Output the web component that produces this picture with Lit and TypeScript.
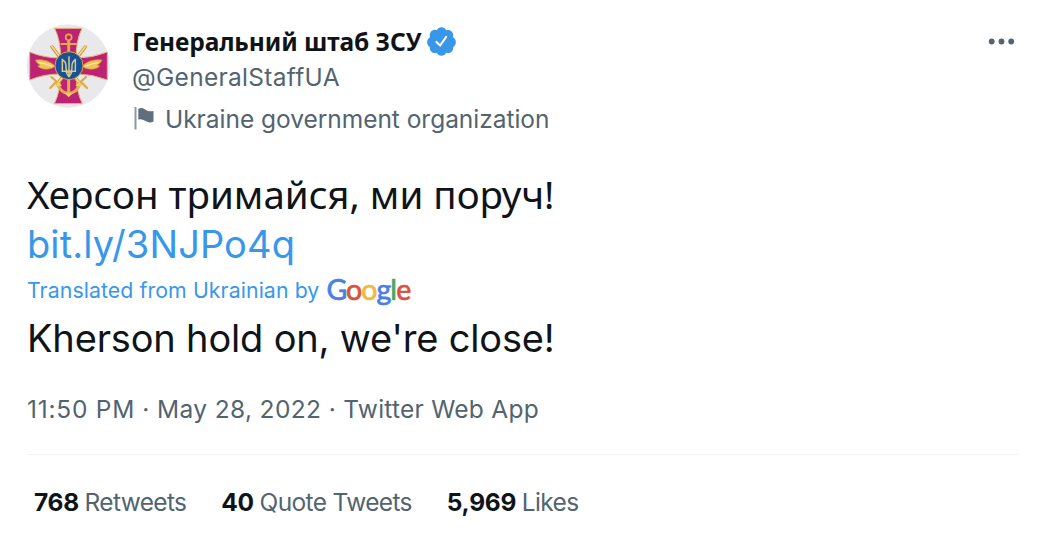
import { LitElement, html, css, svg } from 'lit';
import { customElement } from 'lit/decorators.js';

@customElement('staff-emblem')
class StaffEmblem extends LitElement {
    static styles = css`
        :host {
            display: block;
            width: 84px;
            height: 84px;
        }

        svg {
            display: block;
        }
    `;

    render() {
        const half = svg`
            <g stroke-linecap="round" fill="none">
                <path d="M196 92L112 204" stroke="#c99236" stroke-width="10" />
                <path d="M197 90L112 204" stroke="#f7d98a" stroke-width="5" />
                <path d="M94 183L121 207" stroke="#dba541" stroke-width="6" />
                <path d="M108 198L91 216" stroke="#e0aa45" stroke-width="7" />
            </g>
            <path
                d="M46 132C66 129 90 134 106 151C89 164 64 162 53 150L60 147C54 145 49 139 46 132Z"
                fill="#f0c35c"
                stroke="#c58c2e"
                stroke-width="2"
            />
            <path d="M58 140Q78 143 97 151" fill="none" stroke="#fff0b8" stroke-width="3" />
        `;
        return html`
            <svg width="84" height="84" viewBox="18 24 252 252">
                <circle cx="145" cy="150" r="125" fill="#e9e9eb" />
                <path
                    d="M104 37H186Q168 74 168 126Q218 126 262 108V192Q218 174 168 174Q168 224 187 263H103Q122 224 122 174Q72 174 29 192V108Q72 126 122 126Q122 74 104 37Z"
                    fill="#bd2275"
                    stroke="#e5b777"
                    stroke-width="3"
                />
                <g>${half}</g>
                <g transform="matrix(-1 0 0 1 292 0)">${half}</g>
                <g fill="none" stroke="#e3ae49">
                    <circle cx="146" cy="64" r="9" stroke-width="5" />
                    <path d="M146 75V108" stroke-width="9" />
                    <path d="M124 84H168" stroke-width="6" stroke-linecap="round" />
                    <path d="M146 192V228" stroke-width="9" />
                    <path d="M113 205Q122 231 146 232Q170 231 179 205" stroke-width="9" />
                </g>
                <path d="M106 212L113 196L126 210ZM186 212L179 196L166 210ZM134 232L146 244L158 232Z" fill="#f1cb74" />
                <circle cx="147" cy="149" r="42" fill="#165294" stroke="#d8a548" stroke-width="3" />
                <path
                    d="M147 121V178M127 128V166H166V128M127 131Q139 138 138 152Q137 166 147 170Q157 166 156 152Q155 138 166 131M138 166Q140 174 147 182Q154 174 156 166"
                    fill="none"
                    stroke="#dcc78c"
                    stroke-width="4.5"
                />
            </svg>
        `;
    }
}

@customElement('app-root')
class AppRoot extends LitElement {
    static styles = css`
        :host {
            display: block;
            box-sizing: border-box;
            height: 544px;
            padding: 24px 25px 0 26px;
            background: #fff;
            color: #0f1419;
            font-family: Inter, 'Noto Sans', sans-serif;
            font-size: 24.5px;
            white-space: nowrap;
        }

        svg {
            display: block;
            flex: none;
        }

        header {
            display: flex;
            align-items: flex-start;
            height: 119px;
        }

        .who {
            flex: 1;
            margin-left: 22px;
            color: #536471;
        }

        .name {
            display: flex;
            align-items: center;
            gap: 6px;
            height: 35px;
            color: #0f1419;
            font-family: 'Noto Sans', sans-serif;
            font-weight: 700;
            letter-spacing: -0.08px;
        }

        .handle {
            line-height: 37px;
            letter-spacing: 0.3px;
        }

        .label {
            display: flex;
            align-items: center;
            gap: 10px;
            line-height: 46px;
            letter-spacing: -0.03px;
        }

        .label svg {
            margin: -3px 0 0 2px;
        }

        .more {
            margin: 13px 2px 0 0;
        }

        .text,
        a,
        .translated,
        .translation,
        .meta {
            padding-left: 1px;
        }

        .text {
            margin-top: 27px;
            font-family: 'Noto Sans', sans-serif;
            font-size: 38.5px;
            line-height: 49px;
        }

        a {
            display: block;
            color: #3997e9;
            font-size: 38px;
            line-height: 50px;
            letter-spacing: 0.1px;
            text-decoration: none;
        }

        .translated {
            display: flex;
            align-items: center;
            gap: 7px;
            height: 41px;
            margin-bottom: 2px;
            color: #3997e9;
            font-size: 21.3px;
            letter-spacing: 0.08px;
        }

        .google {
            font-family: Lato, sans-serif;
            font-size: 28.5px;
            line-height: 41px;
            letter-spacing: -0.95px;
        }

        .google span {
            -webkit-text-stroke: 0.7px currentColor;
        }

        .blue {
            color: #4a7fe5;
        }

        .red {
            color: #da5140;
        }

        .yellow {
            color: #f0b93a;
        }

        .green {
            color: #4fa463;
        }

        .translation {
            font-size: 38px;
            line-height: 52px;
            letter-spacing: -0.17px;
        }

        .meta {
            margin-top: 31px;
            line-height: 28px;
            letter-spacing: 0.37px;
        }

        .time {
            letter-spacing: 0.75px;
        }

        .source {
            letter-spacing: 0.25px;
        }

        .meta,
        .stats {
            color: #536471;
        }

        .stats {
            display: flex;
            gap: 35px;
            margin: 31px 0 0 1px;
            padding-left: 7px;
            border-top: 1px solid #eff3f4;
            line-height: 94px;
            letter-spacing: -0.65px;
        }

        b {
            margin-right: -0.5px;
            color: #0f1419;
            font-weight: 650;
            letter-spacing: -0.3px;
        }
    `;

    stats = [
        ['768', 'Retweets'],
        ['40', 'Quote Tweets'],
        ['5,969', 'Likes'],
    ];

    render() {
        return html`
            <header>
                <staff-emblem></staff-emblem>
                <div class="who">
                    <div class="name">
                        Генеральний штаб ЗСУ
                        <svg width="29" height="29" viewBox="1.4 1.4 21.2 21.2">
                            <path
                                fill="#3997e9"
                                d="M22.5 12.5c0-1.58-.875-2.95-2.148-3.6.154-.435.238-.905.238-1.4 0-2.21-1.71-3.998-3.818-3.998-.47 0-.92.084-1.336.25C14.818 2.415 13.51 1.5 12 1.5s-2.816.917-3.437 2.25c-.415-.165-.866-.25-1.336-.25-2.11 0-3.818 1.79-3.818 4 0 .494.083.964.237 1.4-1.272.65-2.147 2.018-2.147 3.6 0 1.495.782 2.798 1.942 3.486-.02.17-.032.34-.032.514 0 2.21 1.708 4 3.818 4 .47 0 .92-.086 1.335-.25.62 1.334 1.926 2.25 3.437 2.25 1.512 0 2.818-.916 3.437-2.25.415.163.865.248 1.336.248 2.11 0 3.818-1.79 3.818-4 0-.174-.012-.344-.033-.513 1.158-.687 1.943-1.99 1.943-3.484z"
                            />
                            <path d="M8.3 12.3L11 14.9L15.4 8.6" fill="none" stroke="#fff" stroke-width="1.5" stroke-linecap="round" />
                        </svg>
                    </div>
                    <div class="handle">@GeneralStaffUA</div>
                    <div class="label">
                        <svg width="21" height="24" viewBox="0 0 21 24">
                            <path d="M1.5 1V23.5" stroke="#8c98a2" stroke-width="2" />
                            <path d="M4.300 3Q7.500 .8 11 3.500T19.500 5V15.500Q15.500 17.500 11.500 15T4.300 13.500Z" fill="#5f707c" />
                        </svg>
                        Ukraine government organization
                    </div>
                </div>
                <svg class="more" width="28" height="9" viewBox="0 0 28 9">
                    <g fill="#536471">
                        <circle cx="3.700" cy="4.500" r="2.900" />
                        <circle cx="13.500" cy="4.500" r="2.900" />
                        <circle cx="23.200" cy="4.500" r="2.900" />
                    </g>
                </svg>
            </header>
            <div class="text">Херсон тримайся, ми поруч!</div>
            <a>bit.ly/3NJPo4q</a>
            <div class="translated">
                Translated from Ukrainian by
                <span class="google"
                    ><span class="blue">G</span><span class="red">o</span><span class="yellow">o</span
                    ><span class="blue">g</span><span class="green">l</span><span class="red">e</span></span
                >
            </div>
            <div class="translation">Kherson hold on, we're close!</div>
            <div class="meta">
                <span class="time">11:50 PM</span> · May 28, 2022 · <span class="source">Twitter Web App</span>
            </div>
            <div class="stats">
                ${this.stats.map(([count, label]) => html`<span><b>${count}</b> ${label}</span>`)}
            </div>
        `;
    }
}
